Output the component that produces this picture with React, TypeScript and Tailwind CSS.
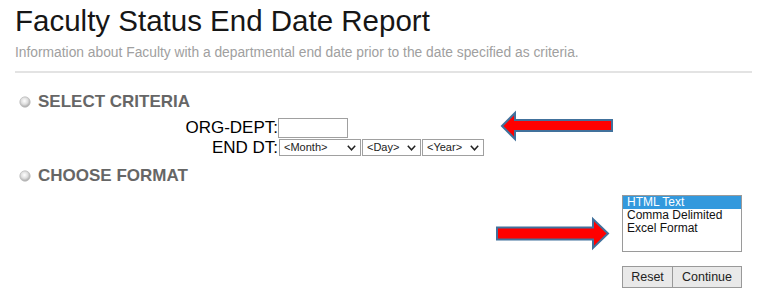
import React from 'react';

const Bullet: React.FC = () => (
  <svg width="12" height="12" viewBox="0 0 12 12" className="shrink-0">
    <defs>
      <radialGradient id="bulletGrad" cx="45%" cy="40%" r="60%">
        <stop offset="0%" stopColor="#ffffff" />
        <stop offset="55%" stopColor="#dedede" />
        <stop offset="100%" stopColor="#a4a4a4" />
      </radialGradient>
    </defs>
    <circle cx="6" cy="6" r="5.2" fill="url(#bulletGrad)" stroke="#c0c0c0" strokeWidth="0.8" />
  </svg>
);

const Chevron: React.FC = () => (
  <svg width="9" height="6" viewBox="0 0 9 6" className="shrink-0">
    <path d="M0.8 0.8 L4.5 4.8 L8.2 0.8" fill="none" stroke="#222" strokeWidth="1.5" />
  </svg>
);

const FakeSelect: React.FC<{ label: string; width: string }> = ({ label, width }) => (
  <div className={`${width} h-[17px] border border-[#a0a0a0] bg-white flex items-center justify-between pl-[4px] pr-[4px] text-[11px] leading-[15px] text-[#222]`}>
    <span>{label}</span>
    <Chevron />
  </div>
);

const SectionHeader: React.FC<{ title: string }> = ({ title }) => (
  <div className="flex items-center gap-[7px] pl-[4px]">
    <Bullet />
    <span className="text-[17px] leading-[17px] font-bold text-[#666]">{title}</span>
  </div>
);

export default function App() {
  const formats = ['HTML Text', 'Comma Delimited', 'Excel Format'];

  return (
    <div className="relative w-[768px] h-[301px] overflow-hidden bg-white font-['Liberation_Sans',Arial,sans-serif]">
      <div className="pl-[15px]">
        <h1 className="pt-[6px] text-[29.5px] leading-[30px] text-[#161616]">Faculty Status End Date Report</h1>
        <p className="mt-[9px] text-[13.8px] leading-[16px] text-[#a0a0a0]">
          Information about Faculty with a departmental end date prior to the date specified as criteria.
        </p>
        <div className="mt-[10px] h-[2px] w-[737px] bg-[#e3e3e3]" />

        <div className="mt-[20px]">
          <SectionHeader title="SELECT CRITERIA" />
        </div>

        <div className="mt-[8px] grid grid-cols-[263px_auto] gap-y-[1px] text-[17px] text-black">
          <div className="text-right leading-[20px]">ORG-DEPT:</div>
          <div className="w-[70px] h-[20px] border border-[#a0a0a0] bg-white" />
          <div className="text-right leading-[18px]">END DT:</div>
          <div className="flex gap-[1px] pl-[1px]">
            <FakeSelect label="<Month>" width="w-[82px]" />
            <FakeSelect label="<Day>" width="w-[59px]" />
            <FakeSelect label="<Year>" width="w-[62px]" />
          </div>
        </div>

        <div className="mt-[10px]">
          <SectionHeader title="CHOOSE FORMAT" />
        </div>
      </div>

      <div className="mt-[11px] flex justify-end pr-[26px]">
        <div className="flex flex-col">
          <div className="w-[120px] h-[57px] border border-[#9a9a9a] bg-white text-[12px] leading-[13px] text-[#111]">
            {formats.map((f, i) => (
              <div
                key={f}
                className={i === 0 ? 'px-[4px] bg-[#3399dd] text-white' : 'px-[4px]'}
              >
                {f}
              </div>
            ))}
          </div>
          <div className="mt-[14px] flex">
            <button className="w-[51px] h-[22px] border border-[#999] bg-[#e9e9e9] text-[12.5px] text-[#222]">
              Reset
            </button>
            <button className="w-[69px] h-[22px] border border-l-0 border-[#999] bg-[#e9e9e9] text-[12.5px] text-[#222]">
              Continue
            </button>
          </div>
        </div>
      </div>

      {/* annotation arrows */}
      <svg className="absolute left-[500px] top-[110px]" width="116" height="32" viewBox="0 0 116 32">
        <polygon
          points="2,16 15,3 15,10 112,10 112,21 15,21 15,29"
          fill="#ff0000"
          stroke="#41719c"
          strokeWidth="2"
          strokeLinejoin="miter"
        />
      </svg>
      <svg className="absolute left-[495px] top-[216px]" width="118" height="35" viewBox="0 0 118 35">
        <polygon
          points="2,11.5 98,11.5 98,3 113,17.5 98,32 98,23.5 2,23.5"
          fill="#ff0000"
          stroke="#41719c"
          strokeWidth="2"
          strokeLinejoin="miter"
        />
      </svg>
    </div>
  );
}
